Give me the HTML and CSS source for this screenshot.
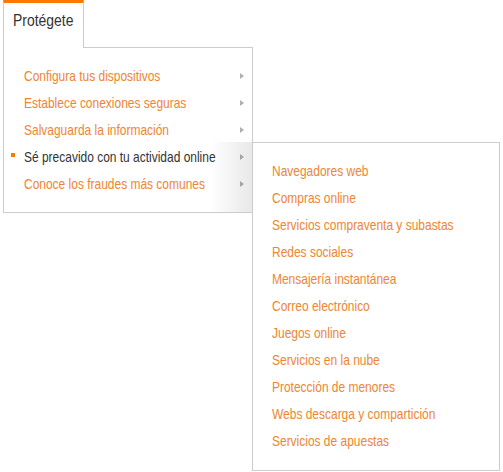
FILE: index.html
```html
<!DOCTYPE html>
<html lang="es">
<head>
<meta charset="utf-8">
<title>Protégete</title>
<link rel="stylesheet" href="styles.css">
</head>
<body>
<nav class="nav">
  <div class="main">
    <div class="tab"><span class="label">Protégete</span></div>
    <div class="panel">
      <ul class="menu">
        <li class="item"><span class="label">Configura tus dispositivos</span><i class="arrow"></i></li>
        <li class="item"><span class="label">Establece conexiones seguras</span><i class="arrow"></i></li>
        <li class="item"><span class="label">Salvaguarda la información</span><i class="arrow"></i></li>
        <li class="item active"><span class="label">Sé precavido con tu actividad online</span><i class="arrow"></i></li>
        <li class="item"><span class="label">Conoce los fraudes más comunes</span><i class="arrow"></i></li>
      </ul>
      <div class="shade"></div>
    </div>
  </div>
  <div class="submenu">
    <ul class="sublist">
      <li><span class="label">Navegadores web</span></li>
      <li><span class="label">Compras online</span></li>
      <li><span class="label">Servicios compraventa y subastas</span></li>
      <li><span class="label">Redes sociales</span></li>
      <li><span class="label">Mensajería instantánea</span></li>
      <li><span class="label">Correo electrónico</span></li>
      <li><span class="label">Juegos online</span></li>
      <li><span class="label">Servicios en la nube</span></li>
      <li><span class="label">Protección de menores</span></li>
      <li><span class="label">Webs descarga y compartición</span></li>
      <li><span class="label">Servicios de apuestas</span></li>
    </ul>
  </div>
</nav>
</body>
</html>
```
FILE: styles.css
```css
html, body {
  margin: 0;
  padding: 0;
  background: #ffffff;
}
body {
  font-family: "Liberation Sans", Arial, sans-serif;
  color: #333333;
}
.nav {
  display: flex;
  align-items: flex-start;
  margin-left: 3px;
}
.main {
  width: 250px;
  flex: none;
}
.label {
  display: inline-block;
  white-space: nowrap;
  transform: scaleX(0.82);
  transform-origin: left center;
}
.tab {
  position: relative;
  z-index: 2;
  box-sizing: border-box;
  width: 81px;
  height: 48px;
  margin-bottom: -1px;
  border-top: 3px solid #ff7900;
  border-left: 1px solid #cccccc;
  border-right: 1px solid #cccccc;
  background: #ffffff;
  padding: 8px 0 0 9px;
  font-size: 17px;
  line-height: 20px;
  color: #333333;
}
.panel {
  position: relative;
  box-sizing: border-box;
  width: 250px;
  height: 166px;
  border: 1px solid #cccccc;
  background: #ffffff;
}
.menu, .sublist {
  list-style: none;
  margin: 0;
  padding: 0;
}
.menu {
  padding-top: 14px;
}
.item {
  position: relative;
  display: flex;
  align-items: center;
  height: 27px;
  padding: 0 8px 0 20px;
  font-size: 14.6px;
  color: #ee8532;
}
.item .label {
  flex: 1 1 auto;
  min-width: 0;
}
.item.active {
  color: #333333;
}
.item.active::before {
  content: "";
  position: absolute;
  left: 7px;
  top: 10px;
  width: 4px;
  height: 4px;
  background: #ff7900;
}
.arrow {
  flex: none;
  width: 0;
  height: 0;
  border-top: 3.5px solid transparent;
  border-bottom: 3.5px solid transparent;
  border-left: 4px solid #b0b0b0;
}
.shade {
  position: absolute;
  right: 0;
  top: 94px;
  bottom: 0;
  width: 42px;
  background: linear-gradient(to right, rgba(0,0,0,0), rgba(0,0,0,0.09));
  pointer-events: none;
}
.submenu {
  position: relative;
  z-index: 3;
  flex: none;
  margin-top: 142px;
  margin-left: -1px;
  box-sizing: border-box;
  width: 248px;
  height: 329px;
  border: 1px solid #cccccc;
  background: #ffffff;
}
.sublist {
  padding: 15px 0 0 19px;
}
.sublist li {
  height: 27px;
  line-height: 27px;
  font-size: 14.6px;
  color: #ee8532;
}
```
